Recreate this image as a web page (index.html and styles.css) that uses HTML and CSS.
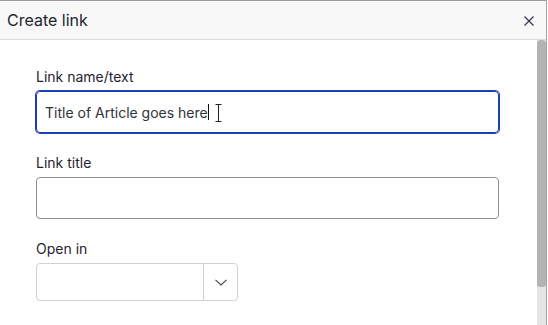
FILE: index.html
```html
<!DOCTYPE html>
<html lang="en">
<head>
  <meta charset="UTF-8" />
  <meta name="viewport" content="width=device-width, initial-scale=1.0"/>
  <title>Create link</title>
  <link rel="stylesheet" href="styles.css">
</head>
<body>
  <div class="dialog">
    <div class="dialog-header">
      <span class="dialog-title">Create link</span>
      <span class="close-btn">
        <svg width="10" height="10" viewBox="0 0 10 10">
          <path d="M0.5 0.5 L9.5 9.5 M9.5 0.5 L0.5 9.5" stroke="#2b2f45" stroke-width="1.1" fill="none"/>
        </svg>
      </span>
    </div>

    <div class="dialog-main">
      <div class="dialog-body">
        <div class="field">
          <label class="field-label">Link name/text</label>
          <div class="text-input focused">
            <span class="input-value">Title of Article goes here</span><span class="caret"></span>
            <!-- mouse I-beam over the field -->
            <svg class="ibeam" width="7" height="18" viewBox="0 0 7 18">
              <path d="M0.5 0.5 H6.5 M3.5 0.5 V17.5 M0.5 17.5 H6.5" stroke="#222" stroke-width="1" fill="none"/>
            </svg>
          </div>
        </div>

        <div class="field">
          <label class="field-label">Link title</label>
          <div class="text-input"></div>
        </div>

        <div class="field">
          <label class="field-label">Open in</label>
          <div class="select-box">
            <div class="select-value"></div>
            <div class="select-arrow">
              <svg width="12" height="7" viewBox="0 0 12 7">
                <path d="M0.5 0.8 L6 6 L11.5 0.8" stroke="#3c4150" stroke-width="1.1" fill="none"/>
              </svg>
            </div>
          </div>
        </div>
      </div>

      <div class="scrollbar">
        <div class="scroll-thumb"></div>
      </div>
    </div>
  </div>
</body>
</html>
```

FILE: styles.css
```css
body {
  margin: 0;
  font-family: Inter, "Noto Sans", sans-serif;
  color: #1f2333;
  background-color: #fff;
}
.dialog {
  width: 547px;
  height: 325px;
  box-sizing: border-box;
  border-top: 1px solid #9a9a9a;
  border-right: 1px solid #a4a4a4;
  display: flex;
  flex-direction: column;
  overflow: hidden;
}
.dialog-header {
  height: 39px;
  flex: none;
  box-sizing: border-box;
  background-color: #f8f8f9;
  border-bottom: 1px solid #dcdcdc;
  display: flex;
  align-items: center;
  justify-content: space-between;
  padding: 0 12px 0 7px;
}
.dialog-title {
  font-size: 16px;
  color: #22252f;
}
.close-btn {
  display: flex;
  width: 10px;
  height: 10px;
  margin-top: 1px;
}
.dialog-main {
  flex: 1;
  display: flex;
  min-height: 0;
}
.dialog-body {
  flex: 1;
  padding: 28px 38px 0 36px;
}
.scrollbar {
  width: 9px;
  flex: none;
  background-color: #e6e6e6;
}
.scroll-thumb {
  height: 247px;
  background-color: #b3b3b3;
  border-radius: 4px 4px 3px 3px;
}
.field {
  margin-bottom: 21px;
}
.field-label {
  display: block;
  font-size: 14px;
  line-height: 17px;
  color: #1f2333;
  margin-bottom: 6px;
}
.text-input {
  height: 42px;
  box-sizing: border-box;
  border: 1px solid #8f8f8f;
  border-radius: 4px;
  display: flex;
  align-items: center;
  padding: 0 8px;
  position: relative;
}
.text-input.focused {
  border-color: #1c3fb7;
  box-shadow: 0 0 0 1px #1c3fb7;
}
.input-value {
  font-size: 14px;
  color: #30323a;
}
.caret {
  width: 1px;
  height: 16px;
  background-color: #111;
}
.ibeam {
  position: absolute;
  left: 178px;
  top: 12px;
}
.select-box {
  width: 202px;
  height: 38px;
  box-sizing: border-box;
  border: 1px solid #d2d2d2;
  border-radius: 4px;
  display: flex;
}
.select-value {
  flex: 1;
}
.select-arrow {
  width: 33px;
  border-left: 1px solid #d2d2d2;
  display: flex;
  align-items: center;
  justify-content: center;
}
.select-arrow svg {
  margin-top: 1px;
}
```
